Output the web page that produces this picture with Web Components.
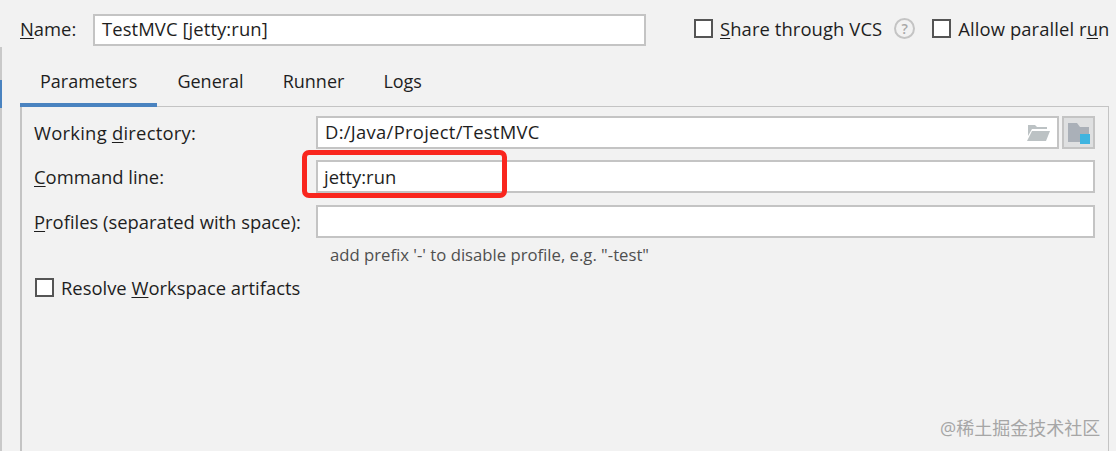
<!DOCTYPE html>
<html lang="en">
<head>
<meta charset="utf-8">
<title>Run configuration</title>
<style>
    html, body { margin: 0; padding: 0; background: #f2f2f2; }
    body { font: 18.4px "Open Sans", "Noto Sans", sans-serif; color: #1e1e1e; }
    u { text-underline-offset: 2px; }
</style>
</head>
<body>

<run-dialog>
    <name-row slot="top">
        <span slot="label"><u>N</u>ame:</span>
        <text-box style="flex:none;width:553px;height:32px;--text-lift:3px;letter-spacing:.1px">TestMVC [jetty:run]</text-box>
        <check-box slot="options"><u>S</u>hare through VCS</check-box>
        <help-icon slot="options"></help-icon>
        <check-box slot="options">Allow parallel r<u>u</u>n</check-box>
    </name-row>
    <tab-bar slot="top">
        <tab-item selected>Parameters</tab-item>
        <tab-item>General</tab-item>
        <tab-item>Runner</tab-item>
        <tab-item>Logs</tab-item>
    </tab-bar>
    <params-panel slot="panel">
        <form-row>
            <span slot="label" style="letter-spacing:.25px">Working <u>d</u>irectory:</span>
            <text-box style="letter-spacing:.3px;--text-lift:2px">D:/Java/Project/TestMVC<folder-open-icon slot="end"></folder-open-icon></text-box>
            <module-button slot="after"></module-button>
        </form-row>
        <form-row style="--row-top:11px">
            <span slot="label"><u>C</u>ommand line:</span>
            <text-box style="--text-indent:-1px">jetty:run<red-mark slot="over"></red-mark></text-box>
        </form-row>
        <form-row style="--row-top:12px">
            <span slot="label"><u>P</u>rofiles (separated with space):</span>
            <text-box></text-box>
        </form-row>
        <hint-line>add prefix '-' to disable profile, e.g. "-test"</hint-line>
        <check-box style="margin:9px 0 0 1px">Resolve <u>W</u>orkspace artifacts</check-box>
    </params-panel>
    <water-mark slot="over">@稀土掘金技术社区</water-mark>
</run-dialog>

<script>
// small helper, every element below is just a template plus a shadow root
function define(tag, html) {
    const template = document.createElement('template');
    template.innerHTML = html;
    customElements.define(tag, class extends HTMLElement {
        constructor() {
            super();
            this.attachShadow({mode: 'open'});
            this.shadowRoot.appendChild(template.content.cloneNode(true));
        }
    });
}

define('run-dialog', `
    <style>
        :host { display: flex; position: relative; width: 1116px; height: 451px; overflow: hidden; background: #f2f2f2; }
        .rail { flex: none; width: 2px; height: 404px; margin-top: 47px; padding-top: 33px; box-sizing: border-box; background: #c9c9c9; }
        .rail div { height: 28px; background: #4a83c0; }
        .main { flex: 1; min-width: 0; padding-left: 18px; padding-right: 7px; }
    </style>
    <div class="rail"><div></div></div>
    <div class="main">
        <slot name="top"></slot>
        <slot name="panel"></slot>
    </div>
    <slot name="over"></slot>
`);

define('name-row', `
    <style>
        :host { display: flex; align-items: center; height: 32px; padding-top: 14px; }
        .label { width: 73px; flex: none; padding-bottom: 4px; }
        .options { display: flex; align-items: center; margin-left: 48px; padding-bottom: 4px; white-space: nowrap; letter-spacing: .1px; }
    </style>
    <div class="label"><slot name="label"></slot></div>
    <slot></slot>
    <div class="options"><slot name="options"></slot></div>
`);

define('text-box', `
    <style>
        :host { display: flex; align-items: center; position: relative; box-sizing: border-box; flex: 1; height: 33px; padding: 0 7px; background: #fff; border: 2px solid #c4c4c4; white-space: nowrap; }
        .text { flex: 1; padding-bottom: var(--text-lift, 0); margin-left: var(--text-indent, 0); }
    </style>
    <div class="text"><slot></slot></div>
    <slot name="end"></slot>
    <slot name="over"></slot>
`);

define('check-box', `
    <style>
        :host { display: flex; align-items: center; white-space: nowrap; }
        .box { flex: none; width: 19px; height: 19px; box-sizing: border-box; margin-right: 7px; background: #fff; border: 2px solid #555; }
    </style>
    <div class="box"></div>
    <div><slot></slot></div>
`);

define('help-icon', `
    <style>
        :host { display: block; width: 21px; height: 21px; margin: 0 17px 0 12px; }
        .ring { display: flex; align-items: center; justify-content: center; box-sizing: border-box; width: 21px; height: 21px; border: 2px solid #c4c4c4; border-radius: 50%; color: #a8a8a8; font-size: 14px; font-weight: 600; }
    </style>
    <div class="ring">?</div>
`);

define('tab-bar', `
    <style>
        :host { display: flex; margin-top: 16px; height: 45px; font-size: 18px; }
    </style>
    <slot></slot>
`);

define('tab-item', `
    <style>
        :host { display: block; box-sizing: border-box; height: 45px; padding: 7px 19px 0 20px; border-bottom: 4px solid transparent; position: relative; z-index: 1; }
        :host([selected]) { padding-right: 20px; border-bottom-color: #4a83c0; }
    </style>
    <slot></slot>
`);

define('params-panel', `
    <style>
        :host { display: block; box-sizing: border-box; height: 360px; margin-top: -1px; padding: 9px 13px 0 12px; border: 2px solid #c4c4c4; border-bottom: 0; border-top-width: 1px; border-right-width: 1px; }
    </style>
    <slot></slot>
`);

define('form-row', `
    <style>
        :host { display: flex; align-items: center; margin-top: var(--row-top, 0); }
        .label { flex: none; width: 282px; white-space: nowrap; }
    </style>
    <div class="label"><slot name="label"></slot></div>
    <slot></slot>
    <slot name="after"></slot>
`);

define('folder-open-icon', `
    <style>
        :host { display: block; width: 23px; height: 18px; }
        svg { display: block; }
    </style>
    <svg width="23" height="18" viewBox="0 0 23 18">
        <path d="M1 1h7l2 2h10v2H5L1 12z" fill="#bcc2c4"/>
        <path d="M5 7h18l-4 10H0z" fill="#bcc2c4"/>
    </svg>
`);

define('module-button', `
    <style>
        :host { display: flex; align-items: center; justify-content: center; flex: none; box-sizing: border-box; width: 33px; height: 33px; margin-left: 3px; background: #dfe0e1; border: 2px solid #c4c4c4; }
        svg { display: block; }
    </style>
    <svg width="24" height="24" viewBox="0 0 24 24">
        <path d="M1 2h9l3 4h9v15H1z" fill="#aab0b8"/>
        <rect x="13" y="13" width="10" height="10" fill="#3fb4e0"/>
    </svg>
`);

define('red-mark', `
    <style>
        :host { display: block; position: absolute; left: -16px; top: -12px; width: 195px; height: 38px; border: 5px solid #f9261e; border-radius: 7px; }
    </style>
`);

define('hint-line', `
    <style>
        :host { display: block; margin: 5px 0 0 296px; font-size: 16.7px; color: #4f4f4f; }
    </style>
    <slot></slot>
`);

define('water-mark', `
    <style>
        :host { display: block; position: absolute; left: 940px; top: 414px; font: 18px "Open Sans", "Noto Sans CJK SC", sans-serif; color: #a6a6a6; white-space: nowrap; }
    </style>
    <slot></slot>
`);
</script>
</body>
</html>
